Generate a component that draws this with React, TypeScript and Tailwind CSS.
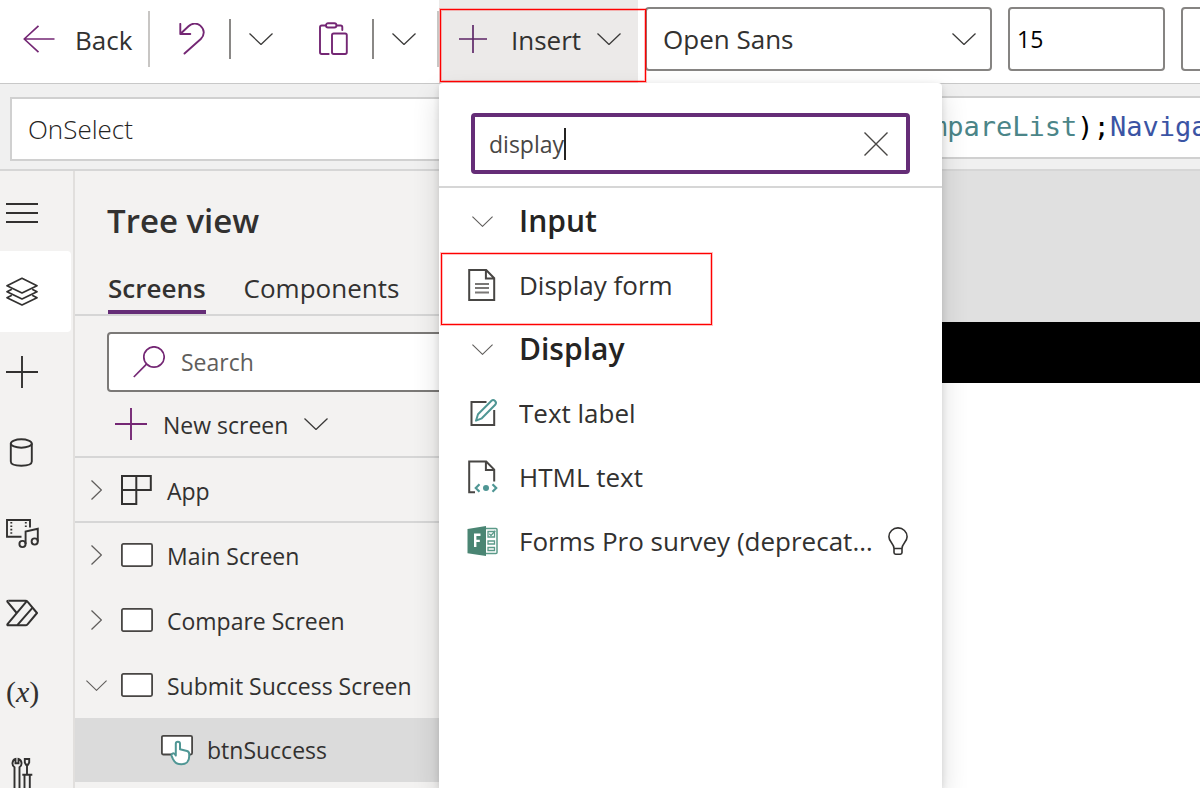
import type { ReactNode } from "react";

type IconProps = { className?: string };

function ChevronDown({ className = "h-3 w-6 text-[#3b3a39]" }: IconProps) {
  return (
    <svg viewBox="0 0 24 12" className={className} fill="none" stroke="currentColor" strokeWidth="1.3" aria-hidden="true">
      <path d="M.5 .5 12 11.5 23.5 .5" />
    </svg>
  );
}

function ChevronRight() {
  return (
    <svg viewBox="0 0 11 20" className="h-5 w-[11px]" fill="none" stroke="currentColor" strokeWidth="1.3" aria-hidden="true">
      <path d="M.5 .5 10.4 10 .5 19.5" />
    </svg>
  );
}

function PlusIcon({ className = "size-8" }: IconProps) {
  return (
    <svg viewBox="0 0 32 32" className={className} fill="none" stroke="currentColor" strokeWidth="1.9" aria-hidden="true">
      <path d="M0 16H32M16 0V32" />
    </svg>
  );
}

function BackIcon() {
  return (
    <svg viewBox="0 0 32 28" className="h-7 w-8 text-[#742774]" fill="none" stroke="currentColor" strokeWidth="1.7" aria-hidden="true">
      <path d="M31.5 14H1.5M15.5 .8 1.2 14 15.5 27.2" strokeLinejoin="round" />
    </svg>
  );
}

function UndoIcon() {
  return (
    <svg viewBox="0 1 26 32" className="h-8 w-[26px] text-[#742774]" fill="none" stroke="currentColor" strokeWidth="1.9" strokeLinecap="round" strokeLinejoin="round" aria-hidden="true">
      <path d="M1.3 1.9V12H11.3M1.3 12 9.5 4.2C13 1 18 .8 21.300 3.6 25.800 7.500 25.800 13 21.800 17L5.500 31.500" />
    </svg>
  );
}

function PasteIcon() {
  return (
    <svg viewBox="0 0 30 34" className="h-[34px] w-[30px] text-[#742774]" fill="none" stroke="currentColor" strokeWidth="1.9" strokeLinecap="round" aria-hidden="true">
      <path d="M7.500 3.500H3.700Q2 3.500 2 5.200V30.300Q2 32 3.700 32H10.700M18.800 3.500H22.600Q24.300 3.500 24.300 5.200V8" />
      <rect x="8" y="1.300" width="10.400" height="4.200" rx="2" />
      <rect x="14" y="11.500" width="14.800" height="20.500" rx="1.700" />
    </svg>
  );
}

function MenuIcon() {
  return (
    <svg viewBox="0 0 32 32" className="size-8" fill="none" stroke="currentColor" strokeWidth="2" aria-hidden="true">
      <path d="M0 9H32M0 18H32M0 27H32" />
    </svg>
  );
}

function LayersIcon() {
  return (
    <svg viewBox="0 1 32 32" className="size-8" fill="none" stroke="currentColor" strokeWidth="1.700" strokeLinejoin="round" aria-hidden="true">
      <path d="M16 3.300 31 10.700 16 18 1 10.700Z" />
      <path d="M5.800 14.200 1 16.700 16 24 31 16.700 26.200 14.200" />
      <path d="M5.800 20.200 1 22.700 16 30 31 22.700 26.200 20.200" />
    </svg>
  );
}

function DataIcon() {
  return (
    <svg viewBox="0 -1 32 32" className="size-8" fill="none" stroke="currentColor" strokeWidth="1.900" aria-hidden="true">
      <ellipse cx="15.300" cy="6.500" rx="10.500" ry="4.200" />
      <path d="M4.800 6.500V24.500C4.800 27 9 28.700 15.300 28.700S25.800 27 25.800 24.500V6.500" />
    </svg>
  );
}

function MediaIcon() {
  return (
    <svg viewBox="0 -1 34 32" className="h-8 w-[34px] overflow-visible" fill="none" stroke="currentColor" strokeWidth="1.900" aria-hidden="true">
      <path d="M24 10.500V3H1V19.700H15.500" />
      <path d="M5.300 5V18M19.800 5V11" strokeDasharray="1.600 1.800" />
      <circle cx="16.500" cy="27" r="3.100" />
      <circle cx="28.700" cy="24.500" r="3.100" />
      <path d="M19.600 27V14.500L31.800 11.800V24.500" />
    </svg>
  );
}

function FlowIcon() {
  return (
    <svg viewBox="0 -1 32 32" className="size-8" fill="none" stroke="currentColor" strokeWidth="2" strokeLinejoin="round" aria-hidden="true">
      <path d="M2.500 3.700H19.500Q20.700 3.700 21.500 4.700L31 16 21.500 27.300Q20.700 28.300 19.500 28.300H2.500Q.6 28.300 1.700 26.800L20.800 4.200" />
      <path d="M2.500 3.700Q.6 3.700 1.700 5.200L10.700 16M11.300 28.200 26.600 10.700" />
    </svg>
  );
}

function ToolsIcon() {
  return (
    <svg viewBox="0 0 32 32" className="size-8" fill="none" stroke="currentColor" strokeWidth="1.900" aria-hidden="true">
      <path d="M8.500 32V11.300C6.500 10 6.300 8.500 6.500 6.800 6.800 4.800 8 3.400 9.500 3V7.200H12.500V3C14.200 3.500 15.300 4.800 15.500 6.800 15.700 8.500 15 10.300 13.500 11.300V32" />
      <path d="M18.800 3H23.200V6.500L22 8.800H20L18.800 6.500ZM21 8.800V18.500M16.300 18.700H26.300M18.500 18.700V32M23.800 18.700V32" />
    </svg>
  );
}

function SearchIcon() {
  return (
    <svg viewBox="0 1 32 32" className="size-8 text-[#742774]" fill="none" stroke="currentColor" strokeWidth="1.700" aria-hidden="true">
      <circle cx="21" cy="12" r="10.200" />
      <path d="M13.500 19.200 .8 32" />
    </svg>
  );
}

function AppIcon() {
  return (
    <svg viewBox="0 0 32 30" className="h-[30px] w-8" fill="none" stroke="currentColor" strokeWidth="2" aria-hidden="true">
      <path d="M1 1H29.800V15H1ZM15.300 1V29H1V15" />
    </svg>
  );
}

function ScreenIcon() {
  return (
    <svg viewBox="0 0 32 24" className="h-6 w-8 text-[#484644]" aria-hidden="true">
      <rect x=".9" y=".9" width="30.200" height="22.200" rx="1.500" fill="#fff" stroke="currentColor" strokeWidth="1.800" />
    </svg>
  );
}

function ButtonControlIcon() {
  return (
    <svg viewBox="0 0 32 32" className="size-8 text-[#484644]" aria-hidden="true">
      <rect x=".9" y="1.800" width="30.200" height="18.700" rx="1.500" fill="#fff" stroke="currentColor" strokeWidth="1.800" />
      <path
        d="M14.800 21.500V9.700C14.800 7 19 7 19 9.700V15.300L26 17C27.600 17.500 28.200 18.500 28.200 20V22.500C28.200 27.500 25 30.300 20.300 30.300 16.500 30.300 13.500 28.500 12 25.200L10.600 21.800C10 19.300 13 18 14.800 21.500Z"
        fill="#fff"
        stroke="#4f9694"
        strokeWidth="2"
        strokeLinejoin="round"
      />
    </svg>
  );
}

function FormIcon() {
  return (
    <svg viewBox="0 0 32 32" className="size-8 text-[#484644]" fill="none" stroke="currentColor" strokeWidth="2" aria-hidden="true">
      <path d="M1.200 1H18.200L26.200 9.200V31H1.200ZM17.900 1V9.400H26.200" />
      <path d="M7 15H21M7 19H21M7 23.500H21" stroke="#797775" strokeWidth="1.800" />
    </svg>
  );
}

function TextLabelIcon() {
  return (
    <svg viewBox="0 0 32 32" className="size-8 text-[#484644]" fill="none" aria-hidden="true">
      <path d="M18.500 5H3.500V28H26.200V13" stroke="currentColor" strokeWidth="2" />
      <path
        d="M8 23.700 10 17.300 23.500 3.800C25.700 1.800 29.500 5 27.200 7.800L13.800 21.300Z"
        stroke="#4f9694"
        strokeWidth="2"
        strokeLinejoin="round"
      />
    </svg>
  );
}

function HtmlTextIcon() {
  return (
    <svg viewBox="0 0 32 34" className="h-[34px] w-8 text-[#484644]" fill="none" aria-hidden="true">
      <path d="M7 32.200H1.200V1.500H18.200L26.200 9.600V21.500M17.900 1.500V10H26.200" stroke="currentColor" strokeWidth="2" />
      <path d="M11.500 24.300 7.800 28 11.500 31.700M24.500 24.300 28.200 28 24.500 31.700" stroke="#4f9694" strokeWidth="2.200" />
      <circle cx="18" cy="28" r="3" fill="#4f9694" />
    </svg>
  );
}

function FormsProIcon() {
  return (
    <svg viewBox="0 0 32 32" className="size-8 overflow-visible" fill="none" aria-hidden="true">
      <rect x="16" y="3.500" width="13" height="25" rx="1" fill="#fff" stroke="#5b9a89" strokeWidth="1.500" />
      <path d="M20 6.500H26.500V12H20ZM20 16H26.500V19H20ZM20 22.500H26.500V25.500H20Z" stroke="#5b9a89" strokeWidth="1.300" />
      <path d="M21.300 8.700 23 10.500 27.300 5.800" stroke="#5b9a89" strokeWidth="1.300" />
      <path d="M-.5 4 18 1V31L-.5 28.200Z" fill="#4a8573" />
      <path d="M7.200 22V9.800H12.500M7.200 15.900H11.800" stroke="#fff" strokeWidth="2.400" />
    </svg>
  );
}

function BulbIcon() {
  return (
    <svg viewBox="0 0 20 28" className="h-7 w-5 shrink-0" fill="none" stroke="currentColor" strokeWidth="1.600" aria-hidden="true">
      <path d="M6 21.500C6 16.500 .9 15 .9 9.700A9.100 8.800 0 0 1 19.100 9.700C19.100 15 14 16.500 14 21.500V25.600Q14 27.200 12.400 27.200H7.600Q6 27.200 6 25.600ZM6 21.500H14" />
    </svg>
  );
}

function CloseIcon() {
  return (
    <svg viewBox="0 0 24 24" className="size-6" fill="none" stroke="currentColor" strokeWidth="1.400" aria-hidden="true">
      <path d="M.5 .5 23.500 23.500M23.500 .5 .5 23.500" />
    </svg>
  );
}

const railItems: { label: string; icon: ReactNode; active?: boolean }[] = [
  { label: "Navigation", icon: <MenuIcon /> },
  { label: "Tree view", icon: <LayersIcon />, active: true },
  { label: "Insert", icon: <PlusIcon /> },
  { label: "Data", icon: <DataIcon /> },
  { label: "Media", icon: <MediaIcon /> },
  { label: "Power Automate", icon: <FlowIcon /> },
  {
    label: "Variables",
    icon: (
      <span className="font-['Liberation_Serif',serif] text-[30px] leading-8">
        (<i>x</i>)
      </span>
    ),
  },
  { label: "Advanced tools", icon: <ToolsIcon /> },
];

const screens = [
  { name: "Main Screen", open: false },
  { name: "Compare Screen", open: false },
  { name: "Submit Success Screen", open: true },
];

function MenuGroup({ title, children }: { title: string; children: ReactNode }) {
  return (
    <section>
      <h3>
        <button type="button" className="flex h-16 w-full items-center pl-[33px] text-left">
          <ChevronDown className="h-[11px] w-[21px] text-[#605e5c]" />
          <span className="ml-[26px] text-[30px] leading-9 font-semibold text-[#252423]">{title}</span>
        </button>
      </h3>
      <ul>{children}</ul>
    </section>
  );
}

function MenuItem({ icon, label, premium, marked }: { icon: ReactNode; label: string; premium?: boolean; marked?: boolean }) {
  return (
    <li className="relative">
      <button type="button" className="flex h-16 w-full items-center pr-[34px] pl-[29px] text-left">
        <span className="flex w-8 shrink-0 justify-center">{icon}</span>
        <span className="ml-[19px] truncate text-[26px] leading-9">{label}</span>
        {premium && (
          <span className="ml-1">
            <BulbIcon />
          </span>
        )}
      </button>
      {marked && (
        <span className="pointer-events-none absolute top-0 left-[2px] h-[72px] w-[271px] border border-[#ff0000] shadow-[0_0_0_1px_rgba(255,0,0,0.25),inset_0_0_0_1px_rgba(255,0,0,0.25)]" />
      )}
    </li>
  );
}

function InsertMenu() {
  return (
    <div className="absolute top-full left-0 h-[calc(100vh-83px)] w-[503px] rounded-t bg-white shadow-[0_12px_28px_rgba(0,0,0,0.14),0_2px_7px_rgba(0,0,0,0.12)]">
      <div className="border-b-2 border-[#d6d6d6] px-8 pt-[30px] pb-3">
        <div className="flex h-[61px] items-center rounded border-4 border-[#652d77] pr-[18px] pl-[14px]">
          <input
            type="text"
            aria-label="Search controls"
            defaultValue="display"
            className="[field-sizing:content] text-[23px] leading-8 text-[#484644] outline-none"
          />
          <span className="h-8 w-[2px] bg-[#252423]" />
          <button type="button" aria-label="Clear search" className="ml-auto text-[#484644]">
            <CloseIcon />
          </button>
        </div>
      </div>
      <div className="pt-px">
        <MenuGroup title="Input">
          <MenuItem icon={<FormIcon />} label="Display form" marked />
        </MenuGroup>
        <MenuGroup title="Display">
          <MenuItem icon={<TextLabelIcon />} label="Text label" />
          <MenuItem icon={<HtmlTextIcon />} label="HTML text" />
          <MenuItem icon={<FormsProIcon />} label="Forms Pro survey (deprecated)" premium />
        </MenuGroup>
      </div>
    </div>
  );
}

function Toolbar() {
  return (
    <header className="relative z-10 flex h-[84px] shrink-0 border-b border-[#c8c8c8] bg-white text-[26px] leading-9">
      <div className="flex shrink-0 items-center pb-[5px]">
        <button type="button" className="flex w-[148px] items-center gap-5 pl-[23px]">
          <BackIcon />
          <span className="pt-[2px]">Back</span>
        </button>
        <span className="h-14 w-[2px] bg-[#c8c6c4]" />
        <button type="button" aria-label="Undo" className="flex w-[79px] pl-[29px]">
          <UndoIcon />
        </button>
        <span className="h-10 w-[2px] bg-[#8a8886]" />
        <button type="button" aria-label="Undo options" className="flex w-[62px] pl-[18px]">
          <ChevronDown />
        </button>
        <button type="button" aria-label="Paste" className="flex w-[79px] justify-center">
          <PasteIcon />
        </button>
        <span className="h-10 w-[2px] bg-[#8a8886]" />
        <button type="button" aria-label="Paste options" className="flex w-[63px] pl-[18px]">
          <ChevronDown />
        </button>
        <span className="h-14 w-[2px] bg-[#c8c6c4]" />
      </div>
      <div className="relative w-[199px] shrink-0">
        <button type="button" className="flex h-full w-full items-center bg-[#eceae9] pb-[5px] pl-5">
          <PlusIcon className="size-7 text-[#5c2566]" />
          <span className="ml-6 pt-[2px]">Insert</span>
          <span className="ml-auto pr-[17px]">
            <ChevronDown />
          </span>
        </button>
        <InsertMenu />
        <span className="pointer-events-none absolute top-[9px] left-px z-10 h-[73px] w-[206px] border border-[#ff0000] shadow-[0_0_0_1px_rgba(255,0,0,0.25),inset_0_0_0_1px_rgba(255,0,0,0.25)]" />
      </div>
      <div className="ml-[7px] flex shrink-0 items-center gap-4 pb-[5px]">
        <div className="relative">
          <select aria-label="Font" className="block h-16 w-[347px] appearance-none rounded border-2 border-[#868482] bg-white pl-4">
            <option>Open Sans</option>
          </select>
          <span className="pointer-events-none absolute inset-y-0 right-4 flex items-center">
            <ChevronDown />
          </span>
        </div>
        <input
          type="text"
          aria-label="Font size"
          defaultValue="15"
          className="h-16 w-[157px] rounded border-2 border-[#868482] px-[7px] text-[23px] text-black"
        />
        <select aria-label="Font weight" className="h-16 w-[157px] appearance-none rounded border-2 border-[#868482] bg-white pl-4">
          <option></option>
        </select>
      </div>
    </header>
  );
}

function FormulaBar() {
  return (
    <div className="flex h-[87px] shrink-0 items-start gap-4 border-b-2 border-[#d6d6d6] bg-[#f0f0f0] pt-3 pl-[10px]">
      <select
        aria-label="Property"
        className="mt-px h-16 w-[460px] shrink-0 appearance-none rounded-none border-2 border-[#d0d0d0] bg-white pl-4 text-[26px] font-light text-[#252423]"
      >
        <option>OnSelect</option>
      </select>
      <div
        role="textbox"
        aria-label="Formula"
        tabIndex={0}
        className="h-[63px] min-w-0 flex-1 overflow-hidden border-2 border-r-0 border-[#d0d0d0] bg-white pl-[313px] font-['DejaVu_Sans_Mono',monospace] text-[27px] leading-[58px] whitespace-nowrap text-black"
      >
        <span className="text-[#3b54a4]">Clear</span>(<span className="text-[#4b8588]">CompareList</span>);
        <span className="text-[#3b54a4]">Navigate</span>
      </div>
    </div>
  );
}

function Rail() {
  return (
    <nav aria-label="App authoring" className="w-[75px] shrink-0 overflow-hidden border-r-2 border-[#e1dfdd]">
      {railItems.map((item) => (
        <button
          key={item.label}
          type="button"
          aria-label={item.label}
          className={
            item.active
              ? "flex h-[81px] w-[71px] items-center rounded-r bg-white pl-[6px]"
              : "flex h-20 w-[71px] items-center pl-[6px]"
          }
        >
          {item.icon}
        </button>
      ))}
    </nav>
  );
}

function TreeView() {
  return (
    <aside className="w-[460px] shrink-0 overflow-hidden text-[23px] leading-8">
      <h2 className="pt-[30px] pl-8 text-[33px] leading-10 font-semibold">Tree view</h2>
      <div role="tablist" className="mt-5 flex h-[55px] border-b-2 border-[#d6d6d6] pl-[33px] text-[26px] leading-9">
        <button type="button" role="tab" aria-selected="true" className="border-b-4 border-[#652d77] pt-1 font-semibold">
          Screens
        </button>
        <button type="button" role="tab" aria-selected="false" className="ml-[38px] border-b-4 border-transparent pt-1">
          Components
        </button>
      </div>
      <div className="mt-4 ml-8 flex h-[60px] items-center rounded border-2 border-[#7b7977] bg-white pl-6">
        <SearchIcon />
        <input
          type="text"
          aria-label="Search tree"
          placeholder="Search"
          className="ml-4 min-w-0 flex-1 outline-none placeholder:text-[#605e5c]"
        />
      </div>
      <button type="button" className="flex h-[66px] w-full items-center border-b-2 border-[#d6d6d6] pl-10">
        <PlusIcon className="size-8 text-[#742774]" />
        <span className="ml-4 pt-[2px]">New screen</span>
        <span className="ml-4">
          <ChevronDown />
        </span>
      </button>
      <ul>
        <li className="flex h-[65px] items-center border-b-2 border-[#d6d6d6] pl-4">
          <button type="button" aria-label="Expand App" className="text-[#605e5c]">
            <ChevronRight />
          </button>
          <span className="ml-[19px]">
            <AppIcon />
          </span>
          <span className="ml-[14px] pt-[2px]">App</span>
        </li>
        {screens.map((screen) => (
          <li key={screen.name} className="flex h-[65px] items-center pb-px pl-[11px]">
            <button
              type="button"
              aria-label={(screen.open ? "Collapse " : "Expand ") + screen.name}
              className="flex w-[21px] justify-center text-[#605e5c]"
            >
              {screen.open ? <ChevronDown className="h-[11px] w-[21px]" /> : <ChevronRight />}
            </button>
            <span className="ml-[14px]">
              <ScreenIcon />
            </span>
            <span className="ml-[14px] pt-[2px]">{screen.name}</span>
          </li>
        ))}
        <li className="flex h-16 items-center bg-[#dbdbdb] pl-[86px]">
          <ButtonControlIcon />
          <span className="ml-[14px]">btnSuccess</span>
        </li>
      </ul>
    </aside>
  );
}

export default function App() {
  return (
    <div className="flex h-screen flex-col overflow-hidden bg-[#f3f2f1] font-['Open_Sans','Noto_Sans',sans-serif] text-[#323130]">
      <Toolbar />
      <FormulaBar />
      <div className="flex min-h-0 flex-1">
        <Rail />
        <TreeView />
        <main className="flex min-w-0 flex-1 flex-col bg-[#e0e0e0] pt-[151px]">
          <div className="h-[61px] bg-black" />
          <div className="flex-1 bg-white" />
        </main>
      </div>
    </div>
  );
}
